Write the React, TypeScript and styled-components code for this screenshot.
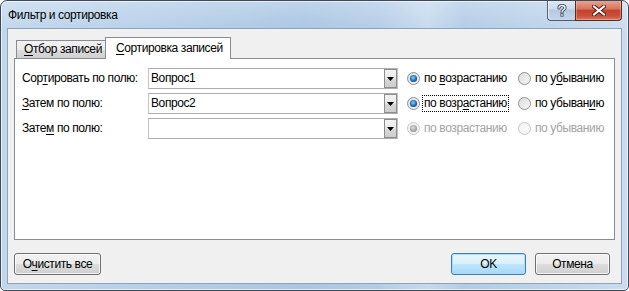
import React from 'react';
import styled, { createGlobalStyle, css } from 'styled-components';

const GlobalStyle = createGlobalStyle`
  html, body {
    margin: 0;
    padding: 0;
    background: #ffffff;
  }
  body {
    font-family: 'Segoe UI', 'Liberation Sans', 'Noto Sans', sans-serif;
    font-size: 12px;
    letter-spacing: -0.4px;
    color: #000;
    white-space: nowrap;
  }
`;

const Window = styled.div`
  box-sizing: border-box;
  width: 629px;
  height: 291px;
  display: flex;
  flex-direction: column;
  border: 1px solid #3e4a58;
  border-radius: 7px 7px 5px 5px;
  overflow: hidden;
  background:
    linear-gradient(180deg, rgba(255, 255, 255, 0.25) 0%, rgba(255, 255, 255, 0) 30px),
    linear-gradient(
      90deg,
      #c2d7ec 0%,
      #b6cfe8 25%,
      #a9c6e3 48%,
      #b3cce6 60%,
      #c6daee 68%,
      #b2cce6 74%,
      #bdd4ea 88%,
      #cadcef 100%
    );
  box-shadow: inset 0 0 0 1px rgba(255, 255, 255, 0.6);
`;

const TitleBar = styled.div`
  display: flex;
  align-items: flex-start;
  height: 27px;
  flex: none;
`;

const Title = styled.div`
  padding: 7px 0 0 7px;
  line-height: 15px;
  color: #000;
`;

const CaptionGroup = styled.div`
  display: flex;
  margin: -1px 6px 0 auto;
`;

const CaptionButton = styled.div<{ $kind: 'help' | 'close' }>`
  box-sizing: border-box;
  height: 21px;
  display: flex;
  align-items: center;
  justify-content: center;
  border: 1px solid #4f5e70;
  border-top: none;
  ${p =>
    p.$kind === 'help'
      ? css`
          width: 28px;
          border-radius: 0 0 0 4px;
          border-right: none;
          background: linear-gradient(180deg, #e3ebf4 0%, #cad9e9 45%, #b4c8de 50%, #c6d6e8 100%);
          box-shadow: inset 1px 0 0 rgba(255, 255, 255, 0.7);
        `
      : css`
          width: 47px;
          border-radius: 0 0 4px 0;
          border-color: #5a2b22;
          background: linear-gradient(180deg, #e8ab9c 0%, #d9715a 45%, #c5432a 52%, #c9503a 80%, #db7a63 100%);
          box-shadow: inset 0 0 0 1px rgba(255, 220, 200, 0.35);
        `}
`;

const Client = styled.div`
  box-sizing: border-box;
  flex: 1;
  margin: 0 6px 6px 6px;
  border: 1px solid #8fa3b9;
  background: #f0f0f0;
  padding: 8px 6px 8px 6px;
  display: flex;
  flex-direction: column;
`;

const TabStrip = styled.div`
  display: flex;
  align-items: flex-end;
  height: 21px;
  padding-left: 2px;
  position: relative;
  z-index: 1;
`;

const Tab = styled.div<{ $active?: boolean }>`
  box-sizing: border-box;
  border: 1px solid #898c95;
  border-bottom: none;
  line-height: 15px;
  ${p =>
    p.$active
      ? css`
          width: 126px;
          height: 22px;
          margin-left: -1px;
          margin-bottom: -1px;
          padding: 3px 0 0 10px;
          background: #ffffff;
        `
      : css`
          width: 90px;
          height: 18px;
          padding: 1px 0 0 7px;
          background: linear-gradient(180deg, #f2f2f2 0%, #ebebeb 50%, #dddddd 51%, #cfcfcf 100%);
        `}
`;

const Panel = styled.div`
  box-sizing: border-box;
  height: 182px;
  border: 1px solid #898c95;
  background: #ffffff;
  padding: 9px 0 0 7px;
  display: flex;
  flex-direction: column;
  gap: 4px;
`;

const Row = styled.div`
  display: flex;
  align-items: center;
  height: 21px;
`;

const Label = styled.div`
  width: 126px;
  line-height: 15px;
`;

const Combo = styled.div`
  box-sizing: border-box;
  width: 250px;
  height: 21px;
  display: flex;
  border: 1px solid #abadb3;
  border-left-color: #c2c4ca;
  border-right-color: #c2c4ca;
  background: #fff;
`;

const ComboText = styled.div`
  flex: 1;
  padding: 2px 0 0 2px;
  line-height: 15px;
`;

const DropButton = styled.div`
  box-sizing: border-box;
  width: 13px;
  height: 19px;
  display: flex;
  align-items: center;
  justify-content: center;
  border: 1px solid #8d8d8d;
  background: linear-gradient(180deg, #f3f3f3 0%, #e9e9e9 50%, #d9d9d9 51%, #cdcdcd 100%);
`;

const RadioGroup = styled.div`
  display: flex;
  margin-left: 9px;
`;

const RadioOption = styled.div<{ $wide?: boolean; $disabled?: boolean }>`
  display: flex;
  align-items: center;
  gap: 3px;
  width: ${p => (p.$wide ? '111px' : 'auto')};
  color: ${p => (p.$disabled ? '#a3a3a3' : '#000')};
  line-height: 15px;
`;

const RadioText = styled.span<{ $focused?: boolean }>`
  box-sizing: border-box;
  padding: 0 1px;
  margin-left: -1px;
  border: 1px dotted ${p => (p.$focused ? '#000' : 'transparent')};
`;

const Key = styled.span`
  text-decoration: underline;
  text-underline-offset: 2px;
`;

const ButtonRow = styled.div`
  display: flex;
  margin-top: 13px;
  padding-right: 5px;
  gap: 9px;
`;

const Button = styled.div<{ $default?: boolean; $width: number }>`
  box-sizing: border-box;
  width: ${p => p.$width}px;
  height: 22px;
  display: flex;
  align-items: center;
  justify-content: center;
  line-height: 15px;
  border: 1px solid ${p => (p.$default ? '#3c7fb1' : '#707070')};
  border-radius: 3px;
  background: ${p =>
    p.$default
      ? 'linear-gradient(180deg, #eaf6fd 0%, #d9f0fc 50%, #bee6fd 51%, #a7d9f5 100%)'
      : 'linear-gradient(180deg, #f2f2f2 0%, #ebebeb 50%, #dddddd 51%, #cfcfcf 100%)'};
  box-shadow: inset 0 0 0 1px ${p => (p.$default ? 'rgba(170, 220, 245, 0.9)' : 'rgba(255, 255, 255, 0.75)')};
`;

const Spacer = styled.div`
  flex: 1;
`;

const Radio = ({ checked, disabled }: { checked?: boolean; disabled?: boolean }) => (
  <svg width="13" height="13" viewBox="0 0 13 13">
    <defs>
      <linearGradient id={`rf${disabled ? 'd' : ''}`} x1="0" y1="0" x2="1" y2="1">
        <stop offset="0" stopColor={disabled ? '#f4f4f4' : '#d6d6d6'} />
        <stop offset="1" stopColor={disabled ? '#fbfbfb' : '#fdfdfd'} />
      </linearGradient>
      <radialGradient id={`rd${disabled ? 'd' : ''}`} cx="0.45" cy="0.4" r="0.6">
        <stop offset="0" stopColor={disabled ? '#e2e2e2' : '#8fd6ff'} />
        <stop offset="0.5" stopColor={disabled ? '#b8b8b8' : '#2e8bd0'} />
        <stop offset="1" stopColor={disabled ? '#8f8f8f' : '#0c4a86'} />
      </radialGradient>
    </defs>
    <circle cx="6.5" cy="6.5" r="6" fill={`url(#rf${disabled ? 'd' : ''})`} stroke={disabled ? '#c4c4c4' : '#8e8f8f'} />
    <circle cx="6.5" cy="6.5" r="4.6" fill="none" stroke={disabled ? '#f0f0f0' : '#e8e8e8'} strokeWidth="0.8" />
    {checked && <circle cx="6.5" cy="6.5" r="3.6" fill={`url(#rd${disabled ? 'd' : ''})`} />}
  </svg>
);

const DropArrow = () => (
  <svg width="7" height="4" viewBox="0 0 7 4">
    <path d="M0 0H7L3.5 4Z" fill="#000" />
  </svg>
);

const HelpIcon = () => (
  <svg width="10" height="13" viewBox="0 0 10 13">
    <path
      d="M2 4C2 2 3.5 1.5 5 1.5S8 2.3 8 4 5 5.8 5 8"
      fill="none"
      stroke="#3e4a58"
      strokeWidth="3.2"
      strokeLinecap="round"
    />
    <path d="M2 4C2 2 3.5 1.5 5 1.5S8 2.3 8 4 5 5.8 5 8" fill="none" stroke="#f4f7fb" strokeWidth="1.4" strokeLinecap="round" />
    <rect x="3.4" y="9.4" width="3.2" height="3.2" fill="#3e4a58" />
    <rect x="4.2" y="10.2" width="1.6" height="1.6" fill="#f4f7fb" />
  </svg>
);

const CloseIcon = () => (
  <svg width="14" height="11" viewBox="0 0 14 11">
    <path d="M2 1.5L12 9.5M12 1.5L2 9.5" stroke="#4a1a12" strokeWidth="4" strokeLinecap="square" />
    <path d="M2 1.5L12 9.5M12 1.5L2 9.5" stroke="#ffffff" strokeWidth="2" strokeLinecap="square" />
  </svg>
);

type SortRow = {
  label: React.ReactNode;
  value: string;
  asc: React.ReactNode;
  desc: React.ReactNode;
  focused?: boolean;
  disabled?: boolean;
};

const rows: SortRow[] = [
  {
    label: (
      <>
        Сор<Key>т</Key>ировать по полю:
      </>
    ),
    value: 'Вопрос1',
    asc: (
      <>
        по <Key>в</Key>озрастанию
      </>
    ),
    desc: (
      <>
        по у<Key>б</Key>ыванию
      </>
    ),
  },
  {
    label: (
      <>
        <Key>З</Key>атем по полю:
      </>
    ),
    value: 'Вопрос2',
    asc: (
      <>
        по возр<Key>а</Key>станию
      </>
    ),
    desc: (
      <>
        по убыван<Key>и</Key>ю
      </>
    ),
    focused: true,
  },
  {
    label: (
      <>
        Зате<Key>м</Key> по полю:
      </>
    ),
    value: '',
    asc: 'по возрастанию',
    desc: 'по убыванию',
    disabled: true,
  },
];

const App: React.FC = () => (
  <>
    <GlobalStyle />
    <Window>
      <TitleBar>
        <Title>Фильтр и сортировка</Title>
        <CaptionGroup>
          <CaptionButton $kind="help">
            <HelpIcon />
          </CaptionButton>
          <CaptionButton $kind="close">
            <CloseIcon />
          </CaptionButton>
        </CaptionGroup>
      </TitleBar>
      <Client>
        <TabStrip>
          <Tab>
            <Key>О</Key>тбор записей
          </Tab>
          <Tab $active>
            <Key>С</Key>ортировка записей
          </Tab>
        </TabStrip>
        <Panel>
          {rows.map((row, i) => (
            <Row key={i}>
              <Label>{row.label}</Label>
              <Combo>
                <ComboText>{row.value}</ComboText>
                <DropButton>
                  <DropArrow />
                </DropButton>
              </Combo>
              <RadioGroup>
                <RadioOption $wide $disabled={row.disabled}>
                  <Radio checked disabled={row.disabled} />
                  <RadioText $focused={row.focused}>{row.asc}</RadioText>
                </RadioOption>
                <RadioOption $disabled={row.disabled}>
                  <Radio disabled={row.disabled} />
                  <RadioText>{row.desc}</RadioText>
                </RadioOption>
              </RadioGroup>
            </Row>
          ))}
        </Panel>
        <ButtonRow>
          <Button $width={87}>
            <span>
              О<Key>ч</Key>истить все
            </span>
          </Button>
          <Spacer />
          <Button $default $width={75}>
            OK
          </Button>
          <Button $width={75}>Отмена</Button>
        </ButtonRow>
      </Client>
    </Window>
  </>
);

export default App;
